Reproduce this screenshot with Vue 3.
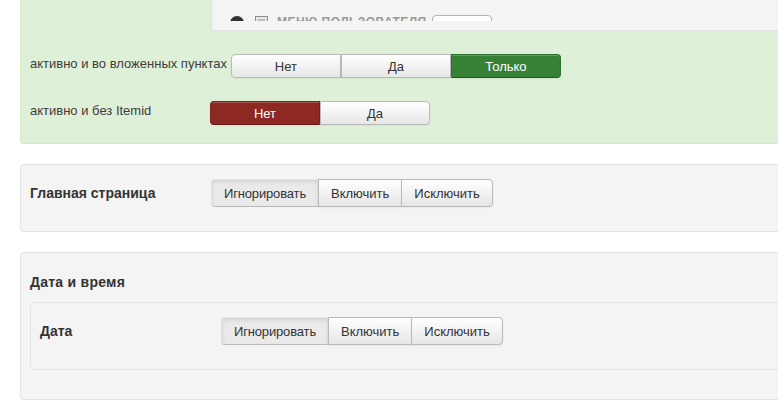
<template>
  <div class="page">
    <section class="panel panel-green">
      <div class="menu-box">
        <div class="menu-clip">
          <div class="menu-item">
            <span class="menu-dot"></span>
            <svg class="menu-icon" width="13" height="13" viewBox="0 0 13 13">
              <rect x="0.5" y="0.5" width="12" height="12" fill="#e4e7ea" stroke="#8d8d8d" />
              <rect x="3" y="3" width="7" height="7" fill="#b9bec4" />
            </svg>
            <span class="menu-title">МЕНЮ ПОЛЬЗОВАТЕЛЯ</span>
            <span class="menu-button"></span>
          </div>
        </div>
      </div>

      <div class="option-row row-first">
        <label class="option-label">активно и во вложенных пунктах</label>
        <div class="btn-group small">
          <button
            v-for="opt in nestedOptions"
            :key="opt"
            type="button"
            class="btn"
            :class="{ 'active-green': opt === 'Только' }"
          >
            {{ opt }}
          </button>
        </div>
      </div>

      <div class="option-row row-second">
        <label class="option-label fixed">активно и без Itemid</label>
        <div class="btn-group small">
          <button
            v-for="opt in itemidOptions"
            :key="opt"
            type="button"
            class="btn"
            :class="{ 'active-red': opt === 'Нет' }"
          >
            {{ opt }}
          </button>
        </div>
      </div>
    </section>

    <section class="panel panel-gray home-panel">
      <div class="field-row">
        <span class="field-title">Главная страница</span>
        <div class="btn-group">
          <button
            v-for="opt in stateOptions"
            :key="opt"
            type="button"
            class="btn"
            :class="{ pressed: opt === 'Игнорировать' }"
          >
            {{ opt }}
          </button>
        </div>
      </div>
    </section>

    <section class="panel panel-gray date-panel">
      <h4 class="group-title">Дата и время</h4>
      <div class="inner-panel">
        <div class="field-row">
          <span class="field-title">Дата</span>
          <div class="btn-group">
            <button
              v-for="opt in stateOptions"
              :key="opt"
              type="button"
              class="btn"
              :class="{ pressed: opt === 'Игнорировать' }"
            >
              {{ opt }}
            </button>
          </div>
        </div>
      </div>
    </section>
  </div>
</template>

<script setup>
const nestedOptions = ['Нет', 'Да', 'Только'];
const itemidOptions = ['Нет', 'Да'];
const stateOptions = ['Игнорировать', 'Включить', 'Исключить'];
</script>

<style>
html,
body {
  margin: 0;
  background: #fff;
  overflow: hidden;
}
</style>

<style scoped>
.page {
  width: 778px;
  height: 408px;
  overflow: hidden;
  font-family: "Liberation Sans", Arial, sans-serif;
  font-size: 13px;
  color: #333;
}

.panel {
  box-sizing: border-box;
  width: 790px;
  margin-left: 20px;
  border: 1px solid #e3e3e3;
  border-radius: 4px;
}

.panel-green {
  height: 144px;
  padding-left: 190px;
  background: #dff0d8;
  border: 0;
  border-bottom: 1px solid #d6e9c6;
  border-left: 1px solid #d6e9c6;
  border-radius: 0 0 0 4px;
}

.panel-gray {
  background: #f4f4f4;
}

.menu-box {
  box-sizing: border-box;
  height: 31px;
  background: #f4f4f4;
  border-bottom: 1px solid #e3e3e3;
  border-left: 1px solid #e3e3e3;
  border-radius: 0 0 0 4px;
}

.menu-clip {
  height: 21px;
  overflow: hidden;
}

.menu-item {
  display: flex;
  align-items: flex-start;
  padding: 15px 0 0 18px;
  color: #999;
}

.menu-dot {
  width: 14px;
  height: 14px;
  margin-top: 1px;
  background: #333;
  border-radius: 50%;
}

.menu-icon {
  margin: 1px 0 0 11px;
}

.menu-title {
  margin-left: 9px;
  font-weight: bold;
  font-size: 12px;
  letter-spacing: 0.45px;
  line-height: 14px;
  white-space: nowrap;
}

.menu-button {
  box-sizing: border-box;
  width: 60px;
  height: 24px;
  margin-left: 5px;
  background: #fff;
  border: 1px solid #b3b3b3;
  border-radius: 4px;
}

.option-row {
  display: flex;
  align-items: flex-start;
  margin-left: -190px;
  padding-left: 9px;
}

.row-first {
  margin-top: 23px;
}

.row-second {
  margin-top: 23px;
}

.option-label {
  padding-top: 1px;
  padding-right: 4px;
  line-height: 17px;
  white-space: nowrap;
  color: #3f3b3b;
}

.option-label.fixed {
  box-sizing: border-box;
  width: 180px;
  padding-right: 0;
}

.btn-group {
  display: flex;
}

.btn {
  box-sizing: border-box;
  height: 28px;
  margin: 0 0 0 -1px;
  padding: 0 12px;
  font: inherit;
  color: #333;
  background: linear-gradient(to bottom, #fff, #e6e6e6);
  border: 1px solid #b9b9b9;
  box-shadow: inset 0 1px 0 rgba(255, 255, 255, 0.2), 0 1px 2px rgba(0, 0, 0, 0.05);
}

.btn:first-child {
  margin-left: 0;
  border-radius: 4px 0 0 4px;
}

.btn:last-child {
  border-radius: 0 4px 4px 0;
}

.btn.pressed {
  width: 108px;
  padding: 0;
  letter-spacing: -0.15px;
  background: #eaeaea;
  border-color: #e4e4e4 #d8d8d8 #bcbcbc #e0e0e0;
  box-shadow: inset 0 2px 4px rgba(0, 0, 0, 0.1);
}

.small .btn {
  width: 110px;
  height: 24px;
  padding: 1px 0 0;
  margin-left: 0;
}

.btn.active-green {
  color: #fff;
  background: #378137;
  border-color: #2f6f2f;
  border-bottom-color: #255a25;
}

.btn.active-red {
  color: #fff;
  background: #8e2823;
  border-color: #7d221e;
  border-bottom-color: #681a17;
}

.field-row {
  display: flex;
  align-items: flex-start;
}

.field-title {
  width: 181px;
  padding-top: 5px;
  font-size: 14px;
  line-height: 18px;
  font-weight: bold;
  color: #333;
}

.home-panel {
  height: 68px;
  margin-top: 20px;
  padding: 14px 0 0 9px;
}

.date-panel {
  height: 148px;
  margin-top: 20px;
  padding: 19px 0 0 9px;
}

.group-title {
  margin: 0;
  font-size: 14px;
  letter-spacing: 0.25px;
  line-height: 20px;
  font-weight: bold;
  color: #333;
}

.inner-panel {
  box-sizing: border-box;
  height: 68px;
  margin-top: 10px;
  padding: 14px 0 0 9px;
  border: 1px solid #e3e3e3;
  border-radius: 4px;
}
</style>
